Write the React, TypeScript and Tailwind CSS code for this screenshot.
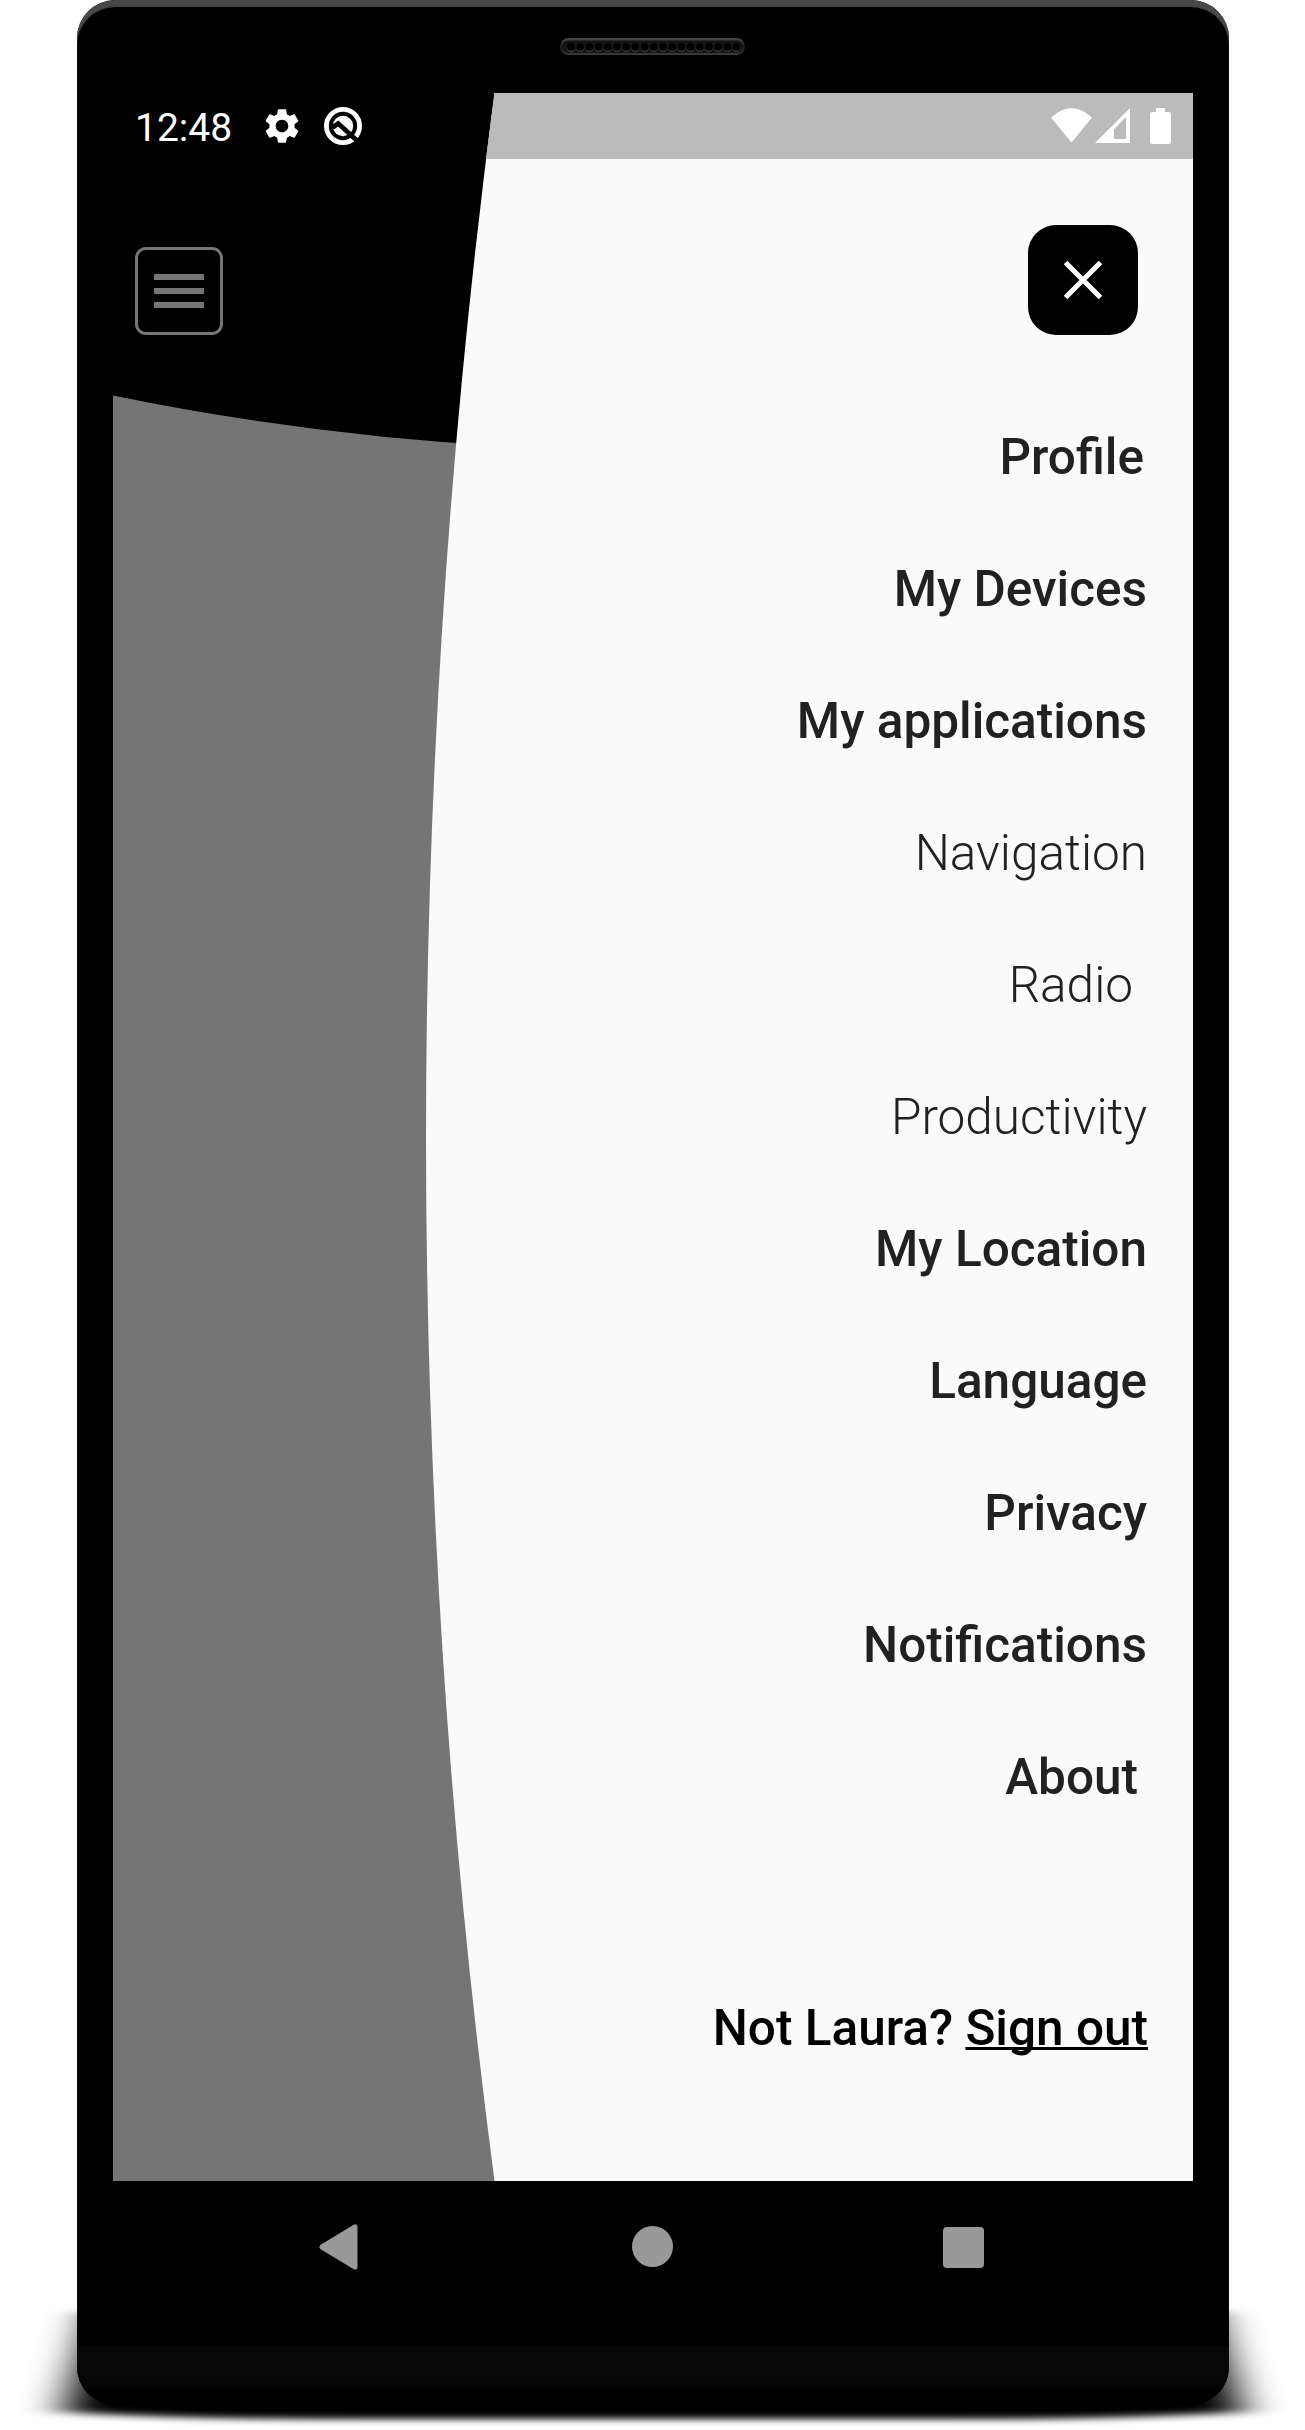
import { MdSettings } from "react-icons/md";

type Item = { label: string; light?: boolean; offset?: string };

const items: Item[] = [
  { label: "Profile", offset: "pr-[3px]" },
  { label: "My Devices" },
  { label: "My applications" },
  { label: "Navigation", light: true },
  { label: "Radio", light: true, offset: "pr-[14px]" },
  { label: "Productivity", light: true },
  { label: "My Location" },
  { label: "Language" },
  { label: "Privacy" },
  { label: "Notifications" },
  { label: "About", offset: "pr-[9px]" },
];

function Speaker() {
  return (
    <svg className="mt-[38px] mr-[1px] h-[17px] w-[185px]" viewBox="0 0 185 17">
      <defs>
        <linearGradient id="rim" x1="0" y1="0" x2="0" y2="1">
          <stop offset="0" stopColor="#4a4a4a" />
          <stop offset="0.5" stopColor="#1c1c1c" />
          <stop offset="1" stopColor="#3c3c3c" />
        </linearGradient>
      </defs>
      <rect width="185" height="17" rx="8.5" fill="url(#rim)" />
      <rect x="2" y="2.5" width="181" height="12.5" rx="6.2" fill="#141414" />
      {Array.from({ length: 19 }, (_, i) => (
        <g key={i}>
          <circle cx={11 + i * 9.2} cy="9.9" r="3.9" fill="#484848" />
          <circle cx={11 + i * 9.2} cy="8.9" r="3.9" fill="#000" />
        </g>
      ))}
    </svg>
  );
}

function Backdrop() {
  return (
    <svg className="absolute inset-0 h-full w-full" viewBox="0 0 1080 2088">
      <rect width="1080" height="2088" fill="#757575" />
      <path d="M0 0H1080V302.5A2688 2688 0 0 1 0 302.5Z" fill="#000" />
      <path d="M381.5 0A7990 7990 0 0 0 381.5 2088H1080V0Z" fill="#fafafa" />
      <path d="M381.5 0A7990 7990 0 0 0 373 66H1080V0Z" fill="#bbb" />
    </svg>
  );
}

function GroundShadow() {
  return (
    <svg className="absolute top-[2230px] left-0 h-[200px] w-[1305px]" viewBox="0 0 1305 200">
      <filter id="soft" filterUnits="userSpaceOnUse" x="-60" y="0" width="1425" height="260">
        <feGaussianBlur stdDeviation="22 3.5" />
      </filter>
      <path
        d="M94 82L80 130L64 182Q180 189 320 189H986Q1126 189 1242 182L1226 130L1212 82Z"
        filter="url(#soft)"
      />
    </svg>
  );
}

function StatusBar() {
  return (
    <div className="flex h-[66px] items-center pl-[22px] text-white">
      <span className="w-[98px] pt-[3px] text-[39px] leading-[66px]">12:48</span>
      <MdSettings className="ml-[27.5px] h-[42px] w-[42px]" />
      <svg className="ml-[21px] h-[38px] w-[38px]" viewBox="0 0 38 38">
        <circle cx="19" cy="19" r="16.6" fill="none" stroke="#fff" strokeWidth="4.8" />
        <circle cx="19" cy="19" r="10.2" fill="#fff" />
        <path d="M8.5 20.5L14.2 16.5L34.5 35" fill="none" stroke="#000" strokeWidth="4.8" />
      </svg>
      <svg className="ml-auto h-[36px] w-[120px]" viewBox="0 0 120 36">
        <path d="M0 9.5Q20.5-9 41 9.5L20.5 34.5Z" fill="#fff" />
        <path d="M44 35L79 0V35Z" fill="#fff" />
        <path d="M63 21.5L75 9V31H63Z" fill="#bbb" />
        <rect x="105" y="0" width="9" height="6" fill="#fff" />
        <rect x="99" y="4" width="21" height="32" rx="2" fill="#fff" />
      </svg>
      <div className="w-[22px]" />
    </div>
  );
}

function Menu() {
  return (
    <nav className="mt-[56px] flex flex-col items-end pr-[46px] text-[49.5px] text-[#212121]">
      {items.map((item) => (
        <div
          key={item.label}
          className={`flex h-[132px] items-center ${item.light ? "font-light" : "font-medium"} ${item.offset ?? ""}`}
        >
          {item.label}
        </div>
      ))}
    </nav>
  );
}

function NavBar() {
  return (
    <div className="flex h-[132px] w-[1080px] items-center">
      <svg className="ml-[206px] h-[46px] w-[40px]" viewBox="0 0 40 46">
        <path d="M3 23L36 3V43Z" fill="#999" stroke="#999" strokeWidth="5" strokeLinejoin="round" />
      </svg>
      <div className="mb-[1px] ml-[273px] h-[41px] w-[41px] rounded-full bg-[#999]" />
      <div className="ml-[270px] h-[41px] w-[41px] rounded-[4px] bg-[#999]" />
    </div>
  );
}

export default function App() {
  return (
    <div className="relative h-[2430px] w-[1305px] overflow-hidden bg-white font-['Roboto',sans-serif]">
      <GroundShadow />
      <div className="relative ml-[77px] flex h-[2405px] w-[1152px] flex-col items-center overflow-hidden rounded-[38px] bg-black">
        <div className="absolute inset-0 rounded-[38px] shadow-[inset_0_7px_1px_#484848]" />
        <div className="relative flex h-[93px] justify-center">
          <Speaker />
        </div>
        <div className="relative h-[2088px] w-[1080px] overflow-hidden">
          <Backdrop />
          <div className="relative flex h-full flex-col">
            <StatusBar />
            <div className="flex justify-between pr-[55px] pl-[22px]">
              <button className="mt-[88px] flex h-[88px] w-[88px] flex-col items-center justify-center gap-[8px] rounded-[11px] border-[3px] border-[#757575]">
                <span className="h-[6px] w-[50px] bg-[#757575]" />
                <span className="h-[6px] w-[50px] bg-[#757575]" />
                <span className="h-[6px] w-[50px] bg-[#757575]" />
              </button>
              <button className="mt-[66px] flex h-[110px] w-[110px] items-center justify-center rounded-[28px] bg-black">
                <svg className="h-[40px] w-[40px]" viewBox="0 0 40 40">
                  <path d="M2.5 2.5L37.5 37.5M37.5 2.5L2.5 37.5" stroke="#fff" strokeWidth="5" />
                </svg>
              </button>
            </div>
            <Menu />
            <p className="mt-[148px] pr-[45px] text-right text-[49.5px] font-medium text-black">
              Not Laura?{" "}
              <span className="underline decoration-[2.5px] underline-offset-[2px] [text-decoration-skip-ink:none]">
                Sign out
              </span>
            </p>
          </div>
        </div>
        <NavBar />
        <div className="mt-[34px] w-full flex-1 bg-linear-to-b from-[#070707] from-60% to-black" />
      </div>
    </div>
  );
}
